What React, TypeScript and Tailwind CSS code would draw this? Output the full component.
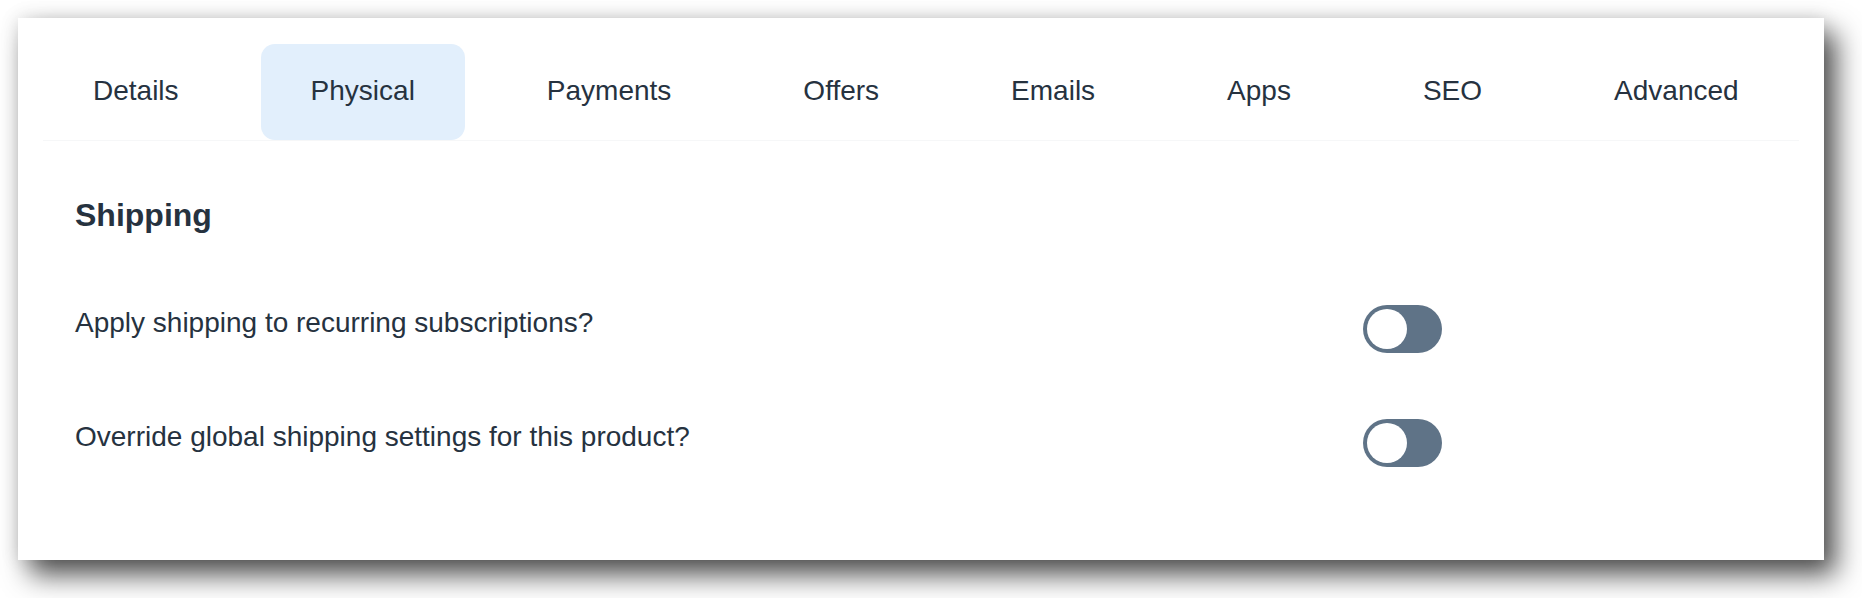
import { useState } from "react";

const tabs = ["Details", "Physical", "Payments", "Offers", "Emails", "Apps", "SEO", "Advanced"];

function Toggle({ on, onChange }: { on: boolean; onChange: () => void }) {
  return (
    <button
      type="button"
      onClick={onChange}
      className={`flex h-[48px] w-[79px] items-center rounded-full bg-[#5f7387] p-[4px] ${on ? "justify-end" : "justify-start"}`}
    >
      <span className="block h-[40px] w-[40px] rounded-full bg-white" />
    </button>
  );
}

export default function App() {
  const [active, setActive] = useState("Physical");
  const [recurring, setRecurring] = useState(false);
  const [override, setOverride] = useState(false);

  const rows = [
    { label: "Apply shipping to recurring subscriptions?", on: recurring, toggle: () => setRecurring(!recurring) },
    { label: "Override global shipping settings for this product?", on: override, toggle: () => setOverride(!override) },
  ];

  return (
    <main className="min-h-screen bg-white pl-[18px] pt-[18px] font-['Liberation_Sans',Arial,sans-serif] text-[#26323f]">
      <div className="w-[1806px] bg-white px-[25px] shadow-[0_0_18px_rgba(0,0,0,0.12),12px_15px_26px_rgba(0,0,0,0.68)]">
        {/* Tab bar */}
        <nav className="flex gap-8 border-b border-[#f6f7f8] pt-[26px]">
          {tabs.map((t) => (
            <button
              key={t}
              type="button"
              onClick={() => setActive(t)}
              className={`flex h-[96px] items-center rounded-[14px] px-[50px] pb-[2px] text-[28px] leading-none ${active === t ? "bg-[#e2effc]" : ""}`}
            >
              {t}
            </button>
          ))}
        </nav>

        {/* Shipping settings */}
        <section className="px-8 pb-[93px] pt-[58px]">
          <h2 className="text-[32px] font-bold leading-[32px]">Shipping</h2>
          <div className="mt-[74px] flex flex-col gap-[66px]">
            {rows.map((r) => (
              <div key={r.label} className="flex items-start">
                <span className="mt-[4px] w-[1288px] text-[28px] leading-[28px]">{r.label}</span>
                <Toggle on={r.on} onChange={r.toggle} />
              </div>
            ))}
          </div>
        </section>
      </div>
    </main>
  );
}
